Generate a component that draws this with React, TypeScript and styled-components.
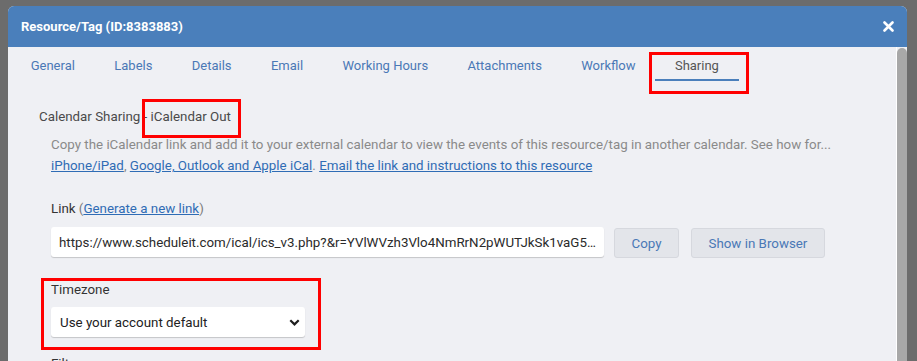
import styled, { createGlobalStyle } from "styled-components";

const GlobalStyle = createGlobalStyle`
  html, body {
    margin: 0;
    padding: 0;
    overflow: hidden;
  }
  body {
    font-family: Roboto, "Liberation Sans", Arial, sans-serif;
    font-size: 13.33px;
  }
  * {
    box-sizing: border-box;
  }
`;

const tabs = [
  "General",
  "Labels",
  "Details",
  "Email",
  "Working Hours",
  "Attachments",
  "Workflow",
  "Sharing",
];

const LINK =
  "https://www.scheduleit.com/ical/ics_v3.php?&r=YVlWVzh3Vlo4NmRrN2pWUTJkSk1vaG5xZz09ZWQ";

function App() {
  return (
    <Page>
      <GlobalStyle />
      <Modal>
        <Header>
          <Title>Resource/Tag (ID:8383883)</Title>
          <CloseButton aria-label="Close">
            <svg width="11" height="11" viewBox="0 0 11 11">
              <path
                d="M1.5 1.5 L9.5 9.5 M9.5 1.5 L1.5 9.5"
                stroke="#fff"
                strokeWidth="2.6"
                strokeLinecap="round"
              />
            </svg>
          </CloseButton>
        </Header>
        <Body>
          <Main>
            <TabBar>
              {tabs.map((t) => (
                <Tab key={t} $active={t === "Sharing"}>
                  {t}
                  {t === "Sharing" && <Mark $t={5} $r={-10} $b={-15} $l={-6} />}
                </Tab>
              ))}
            </TabBar>
            <Content>
              <SectionTitle>
                Calendar Sharing -{" "}
                <Marked>
                  iCalendar Out
                  <Mark $t={-9} $r={-10} $b={-12} $l={-9} />
                </Marked>
              </SectionTitle>
              <Description>
                Copy the iCalendar link and add it to your external calendar to
                view the events of this resource/tag in another calendar. See
                how for...
                <br />
                <TextLink>iPhone/iPad</TextLink>,{" "}
                <TextLink>Google, Outlook and Apple iCal</TextLink>.{" "}
                <TextLink>Email the link and instructions to this resource</TextLink>
              </Description>

              <Field $mt={24}>
                <Label>
                  Link <Muted>(</Muted>
                  <TextLink>Generate a new link</TextLink>
                  <Muted>)</Muted>
                </Label>
                <LinkRow>
                  <LinkInput readOnly value={LINK} />
                  <GhostButton>Copy</GhostButton>
                  <GhostButton>Show in Browser</GhostButton>
                </LinkRow>
              </Field>

              <Field $mt={23} $width={254}>
                <Label>Timezone</Label>
                <SelectWrap>
                  <Select defaultValue="default">
                    <option value="default">Use your account default</option>
                  </Select>
                  <Chevron width="11" height="7" viewBox="0 0 11 7">
                    <path
                      d="M1.3 1.3 L5.5 5.4 L9.7 1.3"
                      fill="none"
                      stroke="#1e1e1e"
                      strokeWidth="2.2"
                    />
                  </Chevron>
                </SelectWrap>
                <Mark $t={-3} $r={-16} $b={-13} $l={-10} />
              </Field>

              <Field $mt={18}>
                <Label>Filters</Label>
              </Field>
            </Content>
          </Main>
          <ScrollTrack>
            <ScrollThumb />
          </ScrollTrack>
        </Body>
      </Modal>
    </Page>
  );
}

const Page = styled.div`
  height: 100vh;
  background: #6c6c6c;
  padding: 6px 10px 0 8px;
`;

const Modal = styled.div`
  width: 899px;
  height: 400px;
  background: #eff0f4;
  border-radius: 6px 6px 0 0;
  overflow: hidden;
  display: flex;
  flex-direction: column;
`;

const Header = styled.div`
  height: 41px;
  flex-shrink: 0;
  background: #4a7fbb;
  display: flex;
  align-items: center;
  justify-content: space-between;
  padding: 0 12px 0 13px;
`;

const Title = styled.h1`
  margin: 0;
  color: #fff;
  font-size: 13px;
  font-weight: 700;
`;

const CloseButton = styled.button`
  border: none;
  background: none;
  padding: 0;
  width: 13px;
  height: 13px;
  display: flex;
  align-items: center;
  justify-content: center;
  cursor: pointer;
`;

const Body = styled.div`
  flex: 1;
  display: flex;
`;

const Main = styled.div`
  flex: 1;
`;

const TabBar = styled.div`
  display: flex;
  padding: 0 3px;
  height: 34px;
`;

const Tab = styled.div<{ $active?: boolean }>`
  position: relative;
  padding: 11px 19.7px 0;
  line-height: 16px;
  font-size: 13px;
  color: ${(p) => (p.$active ? "#555" : "#4a78b6")};
  border-bottom: 2px solid ${(p) => (p.$active ? "#4a7fbb" : "transparent")};
  cursor: pointer;
`;

const Mark = styled.span<{ $t: number; $r: number; $b: number; $l: number }>`
  position: absolute;
  top: ${(p) => p.$t}px;
  right: ${(p) => p.$r}px;
  bottom: ${(p) => p.$b}px;
  left: ${(p) => p.$l}px;
  border: 3px solid #ff0000;
  pointer-events: none;
`;

const Content = styled.div`
  padding: 27px 31px 0;
`;

const SectionTitle = styled.div`
  color: #4a4a4a;
  line-height: 18px;
`;

const Marked = styled.span`
  position: relative;
  display: inline-block;
`;

const Description = styled.p`
  margin: 8px 0 0 12px;
  color: #8a8a8a;
  line-height: 21px;
`;

const TextLink = styled.a`
  color: #2f6cb5;
  text-decoration: underline;
  cursor: pointer;
`;

const Muted = styled.span`
  color: #7a7a7a;
`;

const Field = styled.div<{ $mt: number; $width?: number }>`
  position: relative;
  margin: ${(p) => p.$mt}px 0 0 12px;
  width: ${(p) => (p.$width ? `${p.$width}px` : "auto")};
`;

const Label = styled.div`
  color: #333;
  line-height: 18px;
  margin-bottom: 8px;
`;

const LinkRow = styled.div`
  display: flex;
  align-items: flex-start;
  margin-top: 9px;
`;

const LinkInput = styled.input`
  width: 553px;
  height: 30px;
  border: none;
  border-radius: 3px;
  background: #fff;
  box-shadow: 0 1px 1px rgba(0, 0, 0, 0.18);
  padding: 0 8px;
  font-family: inherit;
  font-size: 13.33px;
  color: #2a2a2a;
  text-overflow: ellipsis;
  outline: none;
`;

const GhostButton = styled.button`
  height: 30px;
  margin: 1px 0 0 10px;
  padding: 0 16.5px;
  border: 1px solid #d6d8de;
  border-radius: 3px;
  background: #e3e5ea;
  color: #4a78b6;
  font-family: inherit;
  font-size: 13.33px;
  cursor: pointer;

  & + & {
    margin-left: 12px;
  }
`;

const SelectWrap = styled.div`
  position: relative;
  height: 30px;
`;

const Select = styled.select`
  appearance: none;
  width: 100%;
  height: 30px;
  border: none;
  border-radius: 3px;
  background: #fff;
  box-shadow: 0 1px 1px rgba(0, 0, 0, 0.18);
  padding: 0 9px;
  font-family: inherit;
  font-size: 13.33px;
  color: #222;
  outline: none;
`;

const Chevron = styled.svg`
  position: absolute;
  right: 5px;
  top: 12px;
  pointer-events: none;
`;

const ScrollTrack = styled.div`
  width: 11px;
  border-left: 1px solid #fff;
  padding-top: 1px;
  background: #eff0f4;
`;

const ScrollThumb = styled.div`
  height: 100%;
  background: #a8a8a8;
  border-radius: 5px 5px 0 0;
`;

export default App;
